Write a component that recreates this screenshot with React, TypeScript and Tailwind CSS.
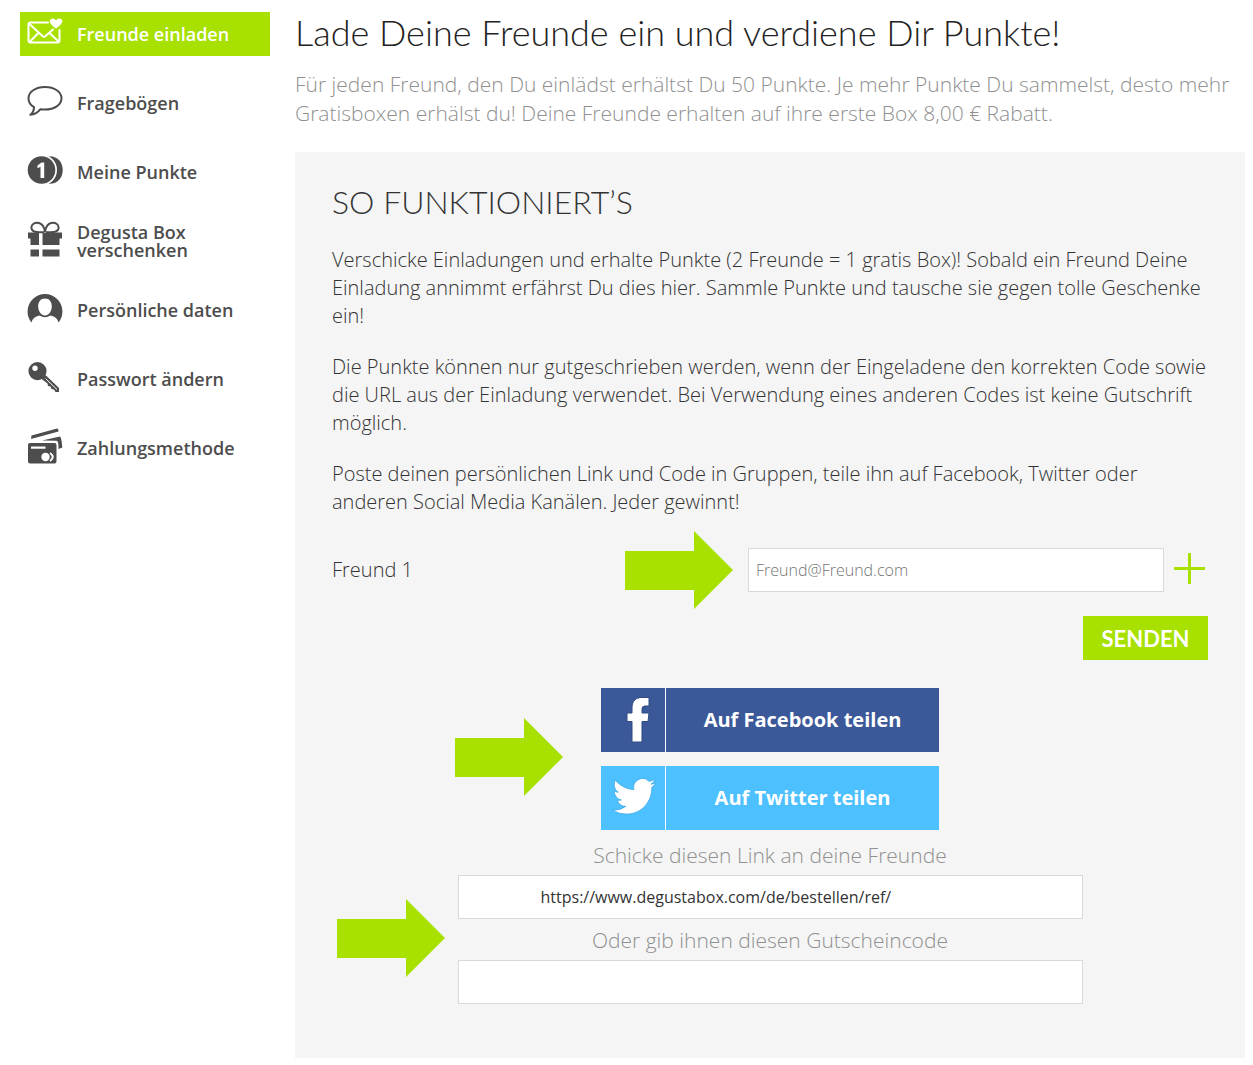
import React from "react";
import clsx from "clsx";

interface MenuItem {
  label: string;
  icon: React.ReactNode;
  active?: boolean;
}

const InviteIcon = () => (
  <svg viewBox="0 0 36 30" className="w-9 h-[30px]" fill="none" stroke="currentColor" strokeWidth="2" strokeLinejoin="round" strokeLinecap="round">
    <path d="M21 5.500H3.500Q1.500 5.500 1.500 7.500V23.500Q1.500 25.500 3.500 25.500H30.500Q32.500 25.500 32.500 23.500V13" />
    <path d="M3 7.500 16 19.500Q17 20.200 18 19.500L26 12.500M3 24.500 11 16.500M31.500 24.500 23 16.500" />
    <path d="M29 11.500C24 8 22.600 5.500 22.900 3.800 23.600.8 27.500.8 29 3.500 30.500.8 34.600.8 35.200 3.800 35.500 5.500 34 8 29 11.500Z" fill="currentColor" stroke="none" />
  </svg>
);

const SpeechIcon = () => (
  <svg viewBox="0 0 36 30" className="w-9 h-[30px]" fill="none" stroke="currentColor" strokeWidth="2" strokeLinejoin="round">
    <path d="M18 1C27.500 1 34.500 5.800 34.500 12.300S27.500 23.500 18 23.500Q15.500 23.500 13.500 23.200 9.500 28.300 3.300 28.800 7 26 7 21.200 1.500 18 1.500 12.300C1.500 5.800 8.500 1 18 1Z" />
  </svg>
);

const PointsIcon = () => (
  <svg viewBox="0 0 36 30" className="w-9 h-[30px]" fill="currentColor">
    <path d="M21 1.200C31 .5 35.700 7.500 35.700 15S31 29.500 21 28.800Z" />
    <circle cx="14.500" cy="15" r="15.500" fill="#fff" />
    <circle cx="14.500" cy="15" r="13.800" />
    <path d="M10.500 10.500 14.500 7.500H17.200V23H13.500V11.800L10.500 13.200Z" fill="#fff" />
  </svg>
);

const GiftIcon = () => (
  <svg viewBox="0 0 36 36" className="w-9 h-9" fill="currentColor">
    <path d="M17 11C13 11.500 5.500 12 4.500 7.500 3.800 3.500 8 .8 12 2 15.500 3 17.500 7 18 11 18.500 7 20.500 3 24 2 28 .8 32.200 3.500 31.500 7.500 30.500 12 23 11.500 19 11" fill="none" stroke="currentColor" strokeWidth="2" />
    <path d="M1 11.500H12V24H3.500V17.500H1ZM15.500 11.500H35V17.500H32.500V24H15.500ZM3.500 28.500H12V35.500H3.500ZM15.500 28.500H32.500V35.500H15.500Z" />
  </svg>
);

const PersonIcon = () => (
  <svg viewBox="0 0 36 32" className="w-9 h-8" fill="currentColor">
    <path fillRule="evenodd" d="M4.500 30.500A17.400 17.400 0 1 1 31.500 30.500Q30.500 25 23.500 23.500 18 27 12.500 23.500 5.500 25 4.500 30.500ZM18 6.500C13.500 6.500 11.200 10 11.200 14.500S14 23.500 18 23.500 24.800 19 24.800 14.500 22.500 6.500 18 6.500Z" />
  </svg>
);

const KeyIcon = () => (
  <svg viewBox="0 0 36 32" className="w-9 h-8" fill="currentColor">
    <path fillRule="evenodd" d="M10.500 1A9 9 0 1 0 10.500 19.200 9 9 0 0 0 10.500 1ZM8 4.500A2.700 2.700 0 1 1 8 9.900 2.700 2.700 0 0 1 8 4.500Z" />
    <path d="M18.500 14 32 27V31H28.500L27 28.500 24.500 28 23.500 25.500 21 25 20.500 22.500 14 17.500Z" />
    <path d="M18.500 17.500 30 28.500" stroke="#fff" strokeWidth="1" fill="none" />
  </svg>
);

const CardsIcon = () => (
  <svg viewBox="0 0 36 36" className="w-9 h-9" fill="currentColor">
    <path d="M4.500 7.500 30 .5Q31.500 .5 31.500 3.500L4 11ZM15 12.500 33 8.500Q34.500 9.500 35.300 19.500L31.500 21Q31.800 13 29.500 12.800Z" />
    <path fillRule="evenodd" d="M3 15H27.500Q29.500 15 29.500 17V33.500Q29.500 35.500 27.500 35.500H3Q1 35.500 1 33.500V17Q1 15 3 15ZM4 18.500V20.800H18.500V18.500Z" />
    <circle cx="18.500" cy="29" r="4.200" fill="#fff" />
    <path d="M23 25Q28.500 29 23 33" stroke="#fff" strokeWidth="2" fill="none" />
  </svg>
);

const Arrow = () => (
  <svg viewBox="0 0 108 78" className="w-[108px] h-[78px] shrink-0 text-[#a8e000]" fill="currentColor" aria-hidden="true">
    <path d="M0 20H69V0L108 39 69 78V59H0Z" />
  </svg>
);

const FacebookLogo = () => (
  <svg viewBox="0 0 64 64" className="w-16 h-16" fill="#fff" stroke="#2f4a85" strokeWidth="1">
    <path d="M31 54V33.500H26V25H31V20C31 12.500 35 9.500 41 9.500H48V18H44Q41 18 41 21V25H48L47 33.500H41V54Z" />
  </svg>
);

const TwitterLogo = () => (
  <svg viewBox="0 0 64 64" className="w-16 h-16">
    <path
      transform="translate(11.500 8.500) scale(1.820)"
      fill="#fff"
      stroke="#3aa5e4"
      strokeWidth=".4"
      d="M23.950 4.570a10 10 0 0 1-2.820.770 4.960 4.960 0 0 0 2.160-2.720c-.950.550-2 .950-3.130 1.180a4.920 4.920 0 0 0-8.380 4.480C7.690 8.090 4.070 6.130 1.640 3.160a4.820 4.820 0 0 0-.670 2.480c0 1.710.870 3.210 2.190 4.100a4.900 4.900 0 0 1-2.230-.620v.060a4.920 4.920 0 0 0 3.950 4.830 5 5 0 0 1-2.210.080 4.940 4.940 0 0 0 4.600 3.420A9.870 9.870 0 0 1 0 19.540a14 14 0 0 0 7.550 2.210c9.050 0 14-7.500 14-13.980 0-.210 0-.420-.020-.630a9.940 9.940 0 0 0 2.420-2.570Z"
    />
  </svg>
);

const menu: MenuItem[] = [
  { label: "Freunde einladen", icon: <InviteIcon />, active: true },
  { label: "Fragebögen", icon: <SpeechIcon /> },
  { label: "Meine Punkte", icon: <PointsIcon /> },
  { label: "Degusta Box verschenken", icon: <GiftIcon /> },
  { label: "Persönliche daten", icon: <PersonIcon /> },
  { label: "Passwort ändern", icon: <KeyIcon /> },
  { label: "Zahlungsmethode", icon: <CardsIcon /> },
];

const Sidebar = () => (
  <nav className="w-[250px] shrink-0 flex flex-col gap-[25px]">
    {menu.map((item) => (
      <a
        key={item.label}
        href="#"
        className={clsx(
          "flex items-center h-11 pl-[7px] gap-[14px] text-[18px] leading-[18px] font-semibold",
          item.active ? "bg-[#a8e000] text-white" : "text-[#4d4d4d]"
        )}
      >
        <span className="flex w-9 shrink-0 pb-1">{item.icon}</span>
        <span className="max-w-[160px]">{item.label}</span>
      </a>
    ))}
  </nav>
);

interface ShareButtonProps {
  logo: React.ReactNode;
  label: string;
  className: string;
}

const ShareButton = ({ logo, label, className }: ShareButtonProps) => (
  <button type="button" className={clsx("flex items-center w-[338px] h-16 text-white text-[20px] font-bold", className)}>
    <span className="w-[65px] border-r border-white">{logo}</span>
    <span className="flex-1">{label}</span>
  </button>
);

const inputStyle = "h-11 border border-[#d9d9d9] bg-white text-[16px]";

const App = () => {
  return (
    <div className="flex gap-[25px] bg-white pt-3 pl-5 pr-2 pb-[7px] font-['Open_Sans',sans-serif]">
      <Sidebar />

      <main className="flex-1 min-w-0">
        <h1 className="font-['Lato',sans-serif] font-light text-[36px] leading-[40px] text-[#222]">
          Lade Deine Freunde ein und verdiene Dir Punkte!
        </h1>
        <p className="mt-[18px] text-[21px] leading-[29px] font-light text-[#909090]">
          Für jeden Freund, den Du einlädst erhältst Du 50 Punkte. Je mehr Punkte Du sammelst, desto mehr
          Gratisboxen erhälst du! Deine Freunde erhalten auf ihre erste Box 8,00 € Rabatt.
        </p>

        <section className="mt-6 bg-[#f5f5f5] pt-[30px] px-[37px] pb-[54px] text-[#333]">
          <h2 className="font-['Lato',sans-serif] font-light text-[32px] leading-[40px] text-[#333]">
            SO FUNKTIONIERT’S
          </h2>
          <div className="mt-6 flex flex-col gap-[23px] text-[20px] leading-[28px] font-light">
            <p>
              Verschicke Einladungen und erhalte Punkte (2 Freunde = 1 gratis Box)! Sobald ein Freund Deine
              Einladung annimmt erfährst Du dies hier. Sammle Punkte und tausche sie gegen tolle Geschenke ein!
            </p>
            <p>
              Die Punkte können nur gutgeschrieben werden, wenn der Eingeladene den korrekten Code sowie
              die URL aus der Einladung verwendet. Bei Verwendung eines anderen Codes ist keine Gutschrift
              möglich.
            </p>
            <p>
              Poste deinen persönlichen Link und Code in Gruppen, teile ihn auf Facebook, Twitter oder
              anderen Social Media Kanälen. Jeder gewinnt!
            </p>
          </div>

          <form onSubmit={(e) => e.preventDefault()}>
            <div className="mt-[15px] flex items-center">
              <label htmlFor="friend" className="flex-1 text-[20px] leading-[28px] font-light">
                Freund 1
              </label>
              <Arrow />
              <input
                id="friend"
                type="email"
                placeholder="Freund@Freund.com"
                className={clsx(inputStyle, "ml-[15px] w-[416px] px-[7px] font-light placeholder:text-[#757575]")}
              />
              <button type="button" aria-label="Freund hinzufügen" className="ml-[10px] mr-[3px] pb-1 text-[#a8e000]">
                <svg viewBox="0 0 31 31" className="w-[31px] h-[31px]" stroke="currentColor" strokeWidth="3" fill="none">
                  <path d="M15.500 0V31M0 15.500H31" />
                </svg>
              </button>
            </div>
            <div className="mt-[7px] flex justify-end">
              <button type="submit" className="w-[125px] h-11 bg-[#a8e000] text-white font-['Lato',sans-serif] font-bold text-[22px]">
                SENDEN
              </button>
            </div>
          </form>

          <div className="mt-7 grid grid-cols-[1fr_auto_1fr] items-center gap-x-[38px]">
            <div className="flex justify-end pb-1">
              <Arrow />
            </div>
            <div className="flex flex-col gap-[14px]">
              <ShareButton logo={<FacebookLogo />} label="Auf Facebook teilen" className="bg-[#3b5998]" />
              <ShareButton logo={<TwitterLogo />} label="Auf Twitter teilen" className="bg-[#4dc0ff]" />
            </div>
          </div>

          <label htmlFor="link" className="mt-[11px] block text-center text-[21px] leading-[28px] font-light text-[#909090]">
            Schicke diesen Link an deine Freunde
          </label>
          <div className="mt-[6px] grid grid-cols-[1fr_625px_1fr] items-center gap-x-[13px]">
            <div className="flex justify-end pb-1">
              <Arrow />
            </div>
            <div className="flex flex-col">
              <input
                id="link"
                type="text"
                readOnly
                value="https://www.degustabox.com/de/bestellen/ref/"
                className={clsx(inputStyle, "w-full pl-[82px] text-[#333]")}
              />
              <label htmlFor="code" className="mt-[7px] mb-[6px] text-center text-[21px] leading-[28px] font-light text-[#909090]">
                Oder gib ihnen diesen Gutscheincode
              </label>
              <input id="code" type="text" className={clsx(inputStyle, "w-full px-[7px] text-center")} />
            </div>
          </div>
        </section>
      </main>
    </div>
  );
};

export default App;
